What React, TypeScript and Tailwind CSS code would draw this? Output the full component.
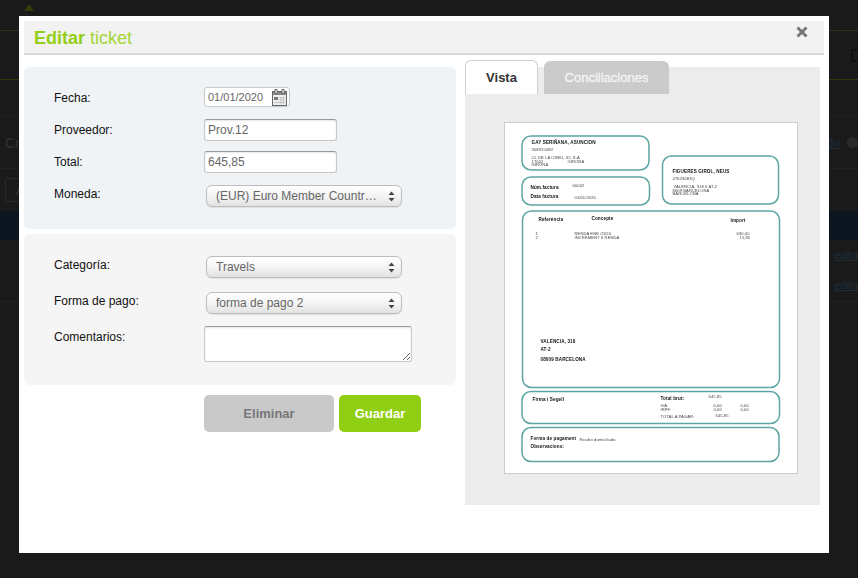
import React from 'react';

const FieldRow: React.FC<{ label: string; children: React.ReactNode; labelClass?: string }> = ({ label, children, labelClass = '' }) => (
    <div className="flex h-[22px] items-center">
        <label className={`w-[150px] shrink-0 text-xs text-[#111] ${labelClass}`}>{label}</label>
        {children}
    </div>
);

const Arrows = () => (
    <svg width="7" height="11" viewBox="0 0 7 11" className="shrink-0">
        <path d="M3.5 0.5 L6.5 4 H0.5 Z M3.5 10.5 L6.5 7 H0.5 Z" fill="#444" />
    </svg>
);

const SelectBox: React.FC<{ value: string }> = ({ value }) => (
    <div className="ml-[2px] flex h-[22px] w-[196px] items-center justify-between rounded-[6px] border border-[#bdbdbd] bg-gradient-to-b from-white via-[#f4f4f4] to-[#e2e2e2] pl-[9px] pr-[6px] text-xs text-[#666] shadow-[0_1px_1px_rgba(0,0,0,0.08)]">
        <span className="truncate">{value}</span>
        <Arrows />
    </div>
);

const TextField: React.FC<{ value: string }> = ({ value }) => (
    <input
        readOnly
        value={value}
        className="h-[22px] w-[133px] rounded-[3px] border border-[#c8c8c8] border-t-[#999] bg-white px-[3px] text-xs text-[#666] shadow-[inset_0_1px_2px_rgba(0,0,0,0.1)] outline-none"
    />
);

const CalendarIcon = () => (
    <svg width="15" height="17" viewBox="0 0 15 17" className="shrink-0">
        <rect x="0.5" y="2.5" width="14" height="14" fill="#eee" stroke="#666" />
        <rect x="1" y="3" width="13" height="3" fill="#888" />
        <rect x="3" y="0.5" width="2" height="4" fill="#fff" stroke="#555" strokeWidth="0.8" />
        <rect x="10" y="0.5" width="2" height="4" fill="#fff" stroke="#555" strokeWidth="0.8" />
        <rect x="2" y="8" width="4" height="3" fill="#777" />
        <path d="M7 8.5H13M7 11H13M2 13.5H13M9 8V15M11.5 8V15" stroke="#bbb" strokeWidth="0.8" />
    </svg>
);

const inkBold = 'fill-[#111] text-[4.6px] font-bold tracking-[0.12px]';
const ink = 'fill-[#444] text-[4.1px] tracking-[0.1px]';

// scanned invoice shown in the preview tab
const InvoicePreview = () => (
    <svg width="292" height="350" viewBox="0 0 292 350" className="block blur-[0.4px]">
        <g fill="none" stroke="#5ca5a2" strokeWidth="1.5">
            <rect x="17" y="13" width="127" height="34" rx="9" />
            <rect x="17" y="54" width="127.5" height="28" rx="9" />
            <rect x="157.5" y="33" width="116" height="48" rx="9" />
            <rect x="17.5" y="88" width="257" height="176.5" rx="9" />
            <rect x="17" y="268.5" width="257.5" height="32" rx="9" />
            <rect x="17" y="304.5" width="257" height="34" rx="9" />
        </g>
        <g transform="translate(-0.5 -1)">
            <text x="27" y="22" className={inkBold}>GAY SERIÑANA, ASUNCION</text>
            <text x="27" y="29" className={ink}>30891548V</text>
            <text x="27" y="37" className={ink}>CL DE LA CREU, 32, 8-A</text>
            <text x="27" y="40.5" className={ink}>17002</text>
            <text x="63" y="40.5" className={ink}>GIRONA</text>
            <text x="27" y="44" className={ink}>GIRONA</text>
            <text x="26" y="67" className={inkBold}>Núm.factura</text>
            <text x="68" y="65" className={ink}>00002</text>
            <text x="26" y="76" className={inkBold}>Data factura</text>
            <text x="70" y="77" className={ink}>01/01/2020</text>
            <text x="168" y="51" className={inkBold}>FIGUERES GIROL, NEUS</text>
            <text x="168" y="58" className={ink}>47623083Q</text>
            <text x="169" y="66" className={ink}>VALENCIA, 318 0 AT-2</text>
            <text x="168" y="69.5" className={ink}>8009   BARCELONA</text>
            <text x="168" y="73" className={ink}>BARCELONA</text>
            <text x="34" y="99" className={inkBold}>Referència</text>
            <text x="87" y="98" className={inkBold}>Concepte</text>
            <text x="226" y="100" className={inkBold}>Import</text>
            <text x="31" y="113" className={ink}>1</text>
            <text x="70" y="113" className={ink}>RENDA ENE /2020</text>
            <text x="232" y="113" className={ink}>630,00</text>
            <text x="31" y="117" className={ink}>2</text>
            <text x="70" y="117" className={ink}>INCREMENT II RENDA</text>
            <text x="235" y="117" className={ink}>15,85</text>
            <text x="36" y="221" className={inkBold}>VALENCIA, 318</text>
            <text x="36" y="229" className={inkBold}>AT-2</text>
            <text x="36" y="239" className={inkBold}>08009 BARCELONA</text>
            <text x="28" y="279" className={inkBold}>Firma i Segell</text>
            <text x="156" y="278" className={inkBold}>Total brut:</text>
            <text x="204" y="276" className={ink}>645,85</text>
            <text x="156" y="285" className={ink}>IVA:</text>
            <text x="209" y="285" className={ink}>0,00</text>
            <text x="236" y="285" className={ink}>0,00</text>
            <text x="156" y="289" className={ink}>IRPF:</text>
            <text x="209" y="289" className={ink}>0,00</text>
            <text x="236" y="289" className={ink}>0,00</text>
            <text x="156" y="296" className={ink}>TOTAL A PAGAR:</text>
            <text x="211" y="295" className={ink}>645,85</text>
            <text x="26" y="318" className={inkBold}>Forma de pagament</text>
            <text x="75" y="319" className={ink}>Recibo domiciliado</text>
            <text x="26" y="326" className={inkBold}>Observacions:</text>
        </g>
    </svg>
);

const Backdrop = () => (
    <div className="flex h-[578px] flex-col bg-[#1a1a1a] text-[#333]">
        <div className="h-[31px] shrink-0 border-b border-[#33360f] pl-6">
            <svg width="10" height="7" viewBox="0 0 10 7" className="mt-[4px]"><path d="M5 0 L10 7 H0 Z" fill="#333b0a" /></svg>
        </div>
        <div className="flex h-[49px] shrink-0 items-center justify-end border-b border-[#33360f]">
            <div className="h-[13px] w-[7px] border-y-2 border-l-2 border-[#111]" />
        </div>
        <div className="h-[37px] shrink-0 border-b border-[#222]" />
        <div className="flex h-[52px] shrink-0 items-center justify-between border-b border-[#222] pl-[5px] text-sm">
            <span>Cr</span>
            <span className="flex items-center gap-[7px] text-xs text-[#1c2f3c]">
                <span className="underline">ado</span>
                <span className="h-[11px] w-[11px] rounded-full bg-[#2a2a2a]" />
            </span>
        </div>
        <div className="flex h-[42px] shrink-0 items-center pl-[5px]">
            <div className="flex h-[24px] w-[30px] items-center rounded-[2px] border border-[#2a2a2a] pl-[10px] text-sm">A</div>
        </div>
        <div className="h-[29px] shrink-0 bg-[#0b1620]" />
        <div className="flex h-[30px] shrink-0 items-center justify-end text-[11px] italic text-[#1c2f3c]"><span className="underline">edita</span></div>
        <div className="flex h-[32px] shrink-0 items-center justify-end border-b border-[#222] text-[11px] italic text-[#1c2f3c]"><span className="underline">edita</span></div>
    </div>
);

export default function App() {
    return (
        <div className="relative h-[578px] w-full overflow-hidden font-['Liberation_Sans',Arial,sans-serif]">
            <Backdrop />

            <div className="absolute left-[19px] top-[16px] h-[537px] w-[810px] bg-white p-[5px]">
                <header className="flex h-[34px] items-start justify-between border-b-2 border-[#d9d9d9] bg-[#f2f2f2] pl-[10px] pr-[16px]">
                    <h1 className="mt-[5px] text-lg leading-[24px] text-[#93cf15]"><b>Editar</b> <span className="text-[#a3d637]">ticket</span></h1>
                    <svg width="12" height="12" viewBox="0 0 12 12" className="mt-[5px]">
                        <path d="M1.5 1.5 L10.5 10.5 M10.5 1.5 L1.5 10.5" stroke="#777" strokeWidth="3" />
                    </svg>
                </header>

                <div className="flex gap-[9px]">
                    <div className="w-[432px]">
                        <section className="mt-[12px] flex h-[162px] flex-col gap-[10px] rounded-[6px] bg-[#eff3f6] pl-[30px] pt-[20px]">
                            <div className="flex h-[22px] items-start">
                                <label className="w-[150px] shrink-0 pt-[3px] text-xs text-[#111]">Fecha:</label>
                                <div className="flex h-[20px] w-[86px] items-center justify-between rounded-[3px] border border-[#c8c8c8] bg-white pl-[3px] pr-[2px] text-[11px] text-[#666]">
                                    <span>01/01/2020</span>
                                    <CalendarIcon />
                                </div>
                            </div>
                            <FieldRow label="Proveedor:"><TextField value="Prov.12" /></FieldRow>
                            <FieldRow label="Total:"><TextField value="645,85" /></FieldRow>
                            <div className="mt-[2px]">
                                <FieldRow label="Moneda:" labelClass="-mt-[5px]"><SelectBox value="(EUR) Euro Member Countr…" /></FieldRow>
                            </div>
                        </section>

                        <section className="mt-[5px] flex h-[151px] flex-col gap-[14px] rounded-[6px] bg-[#f5f5f5] pl-[30px] pt-[22px]">
                            <FieldRow label="Categoría:" labelClass="-mt-[4px]"><SelectBox value="Travels" /></FieldRow>
                            <FieldRow label="Forma de pago:" labelClass="-mt-[4px]"><SelectBox value="forma de pago 2" /></FieldRow>
                            <div className="-mt-[2px] flex items-start">
                                <label className="w-[150px] shrink-0 pt-[3px] text-xs text-[#111]">Comentarios:</label>
                                <textarea readOnly className="h-[36px] w-[208px] resize rounded-[3px] border border-[#c8c8c8] border-t-[#999] bg-white shadow-[inset_0_1px_2px_rgba(0,0,0,0.1)] outline-none" />
                            </div>
                        </section>

                        <div className="mt-[10px] flex gap-[5px] pl-[180px]">
                            <button className="h-[37px] w-[130px] rounded-[5px] bg-[#c9c9c9] text-[13px] font-bold text-[#777]">Eliminar</button>
                            <button className="h-[37px] w-[82px] rounded-[5px] bg-[#91cf14] text-[13px] font-bold text-white">Guardar</button>
                        </div>
                    </div>

                    <div className="w-[355px] pt-[5px]">
                        <div className="flex items-end">
                            <div className="z-10 flex h-[34px] w-[73px] items-center justify-center rounded-t-[6px] border border-b-0 border-[#cfcfcf] bg-white text-[13px] font-bold text-[#333]">Vista</div>
                            <div className="z-10 ml-[6px] flex h-[33px] w-[125px] items-center justify-center rounded-t-[6px] bg-[#cbcbcb] text-[13px] text-[#f5f5f5] [-webkit-text-stroke:0.3px_#f5f5f5]">Conciliaciones</div>
                        </div>
                        <div className="-mt-[27px] h-[438px] bg-[#ececec] pl-[39px] pt-[55px]">
                            <div className="w-[294px] border border-[#cccccc] bg-white">
                                <InvoicePreview />
                            </div>
                        </div>
                    </div>
                </div>
            </div>
        </div>
    );
}
